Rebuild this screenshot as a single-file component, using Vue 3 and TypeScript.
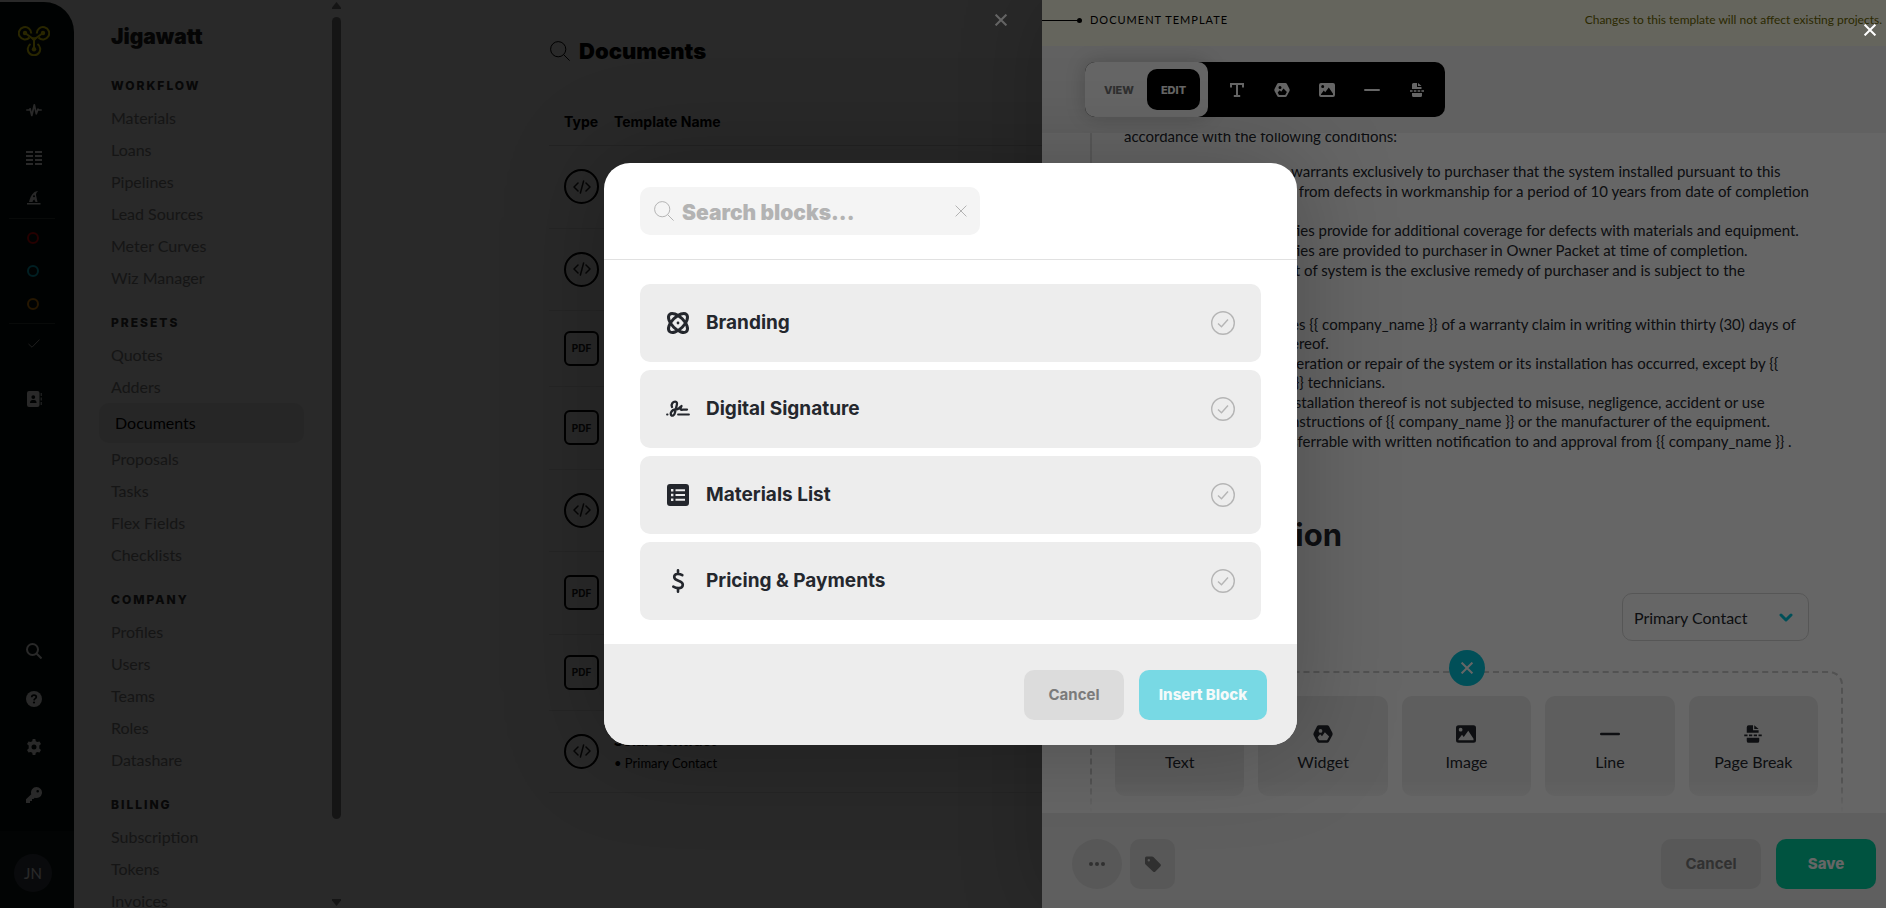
<script setup lang="ts">
import { ref } from 'vue'

interface NavGroup {
  title: string
  items: string[]
}

interface TemplateRow {
  kind: 'code' | 'pdf'
  size: 'short' | 'mid' | 'tall'
  name?: string
  note?: string
}

const groups: NavGroup[] = [
  { title: 'Workflow', items: ['Materials', 'Loans', 'Pipelines', 'Lead Sources', 'Meter Curves', 'Wiz Manager'] },
  { title: 'Presets', items: ['Quotes', 'Adders', 'Documents', 'Proposals', 'Tasks', 'Flex Fields', 'Checklists'] },
  { title: 'Company', items: ['Profiles', 'Users', 'Teams', 'Roles', 'Datashare'] },
  { title: 'Billing', items: ['Subscription', 'Tokens', 'Invoices'] },
]

const rows: TemplateRow[] = [
  { kind: 'code', size: 'tall' },
  { kind: 'code', size: 'mid' },
  { kind: 'pdf', size: 'short' },
  { kind: 'pdf', size: 'tall' },
  { kind: 'code', size: 'mid' },
  { kind: 'pdf', size: 'tall' },
  { kind: 'pdf', size: 'short' },
  { kind: 'code', size: 'mid', name: 'Solar Contract', note: '• Primary Contact' },
]

const tools = ['Text', 'Widget', 'Image', 'Line', 'Page Break']
const blocks = ['Branding', 'Digital Signature', 'Materials List', 'Pricing & Payments']

const warranty: string[] = [
  'warrants exclusively to purchaser that the system installed pursuant to this',
  '\u00a0\u00a0from defects in workmanship for a period of 10 years from date of completion',
]
const coverage: string[] = [
  'ties provide for additional coverage for defects with materials and equipment.',
  'ties are provided to purchaser in Owner Packet at time of completion.',
  '\u00a0t of system is the exclusive remedy of purchaser and is subject to the',
]
const conditions: string[][] = [
  ['es {{ company_name }} of a warranty claim in writing within thirty (30) days of', 'ereof.'],
  ['teration or repair of the system or its installation has occurred, except by {{', '\u00a0}} technicians.'],
  ['\u00a0stallation thereof is not subjected to misuse, negligence, accident or use', 'nstructions of {{ company_name }} or the manufacturer of the equipment.'],
  ['sferrable with written notification to and approval from {{ company_name }} .'],
]

const search = ref('')
const contact = ref('Primary Contact')
</script>

<template>
  <div class="app">
    <svg class="defs" aria-hidden="true">
      <symbol id="i-search" viewBox="0 0 20 20">
        <circle cx="8.200" cy="8.200" r="7.600" fill="none" stroke="currentColor" />
        <path d="M13.600 13.600 19.600 19.600" fill="none" stroke="currentColor" />
      </symbol>
      <symbol id="i-x" viewBox="0 0 12 12">
        <path d="M.6.6 11.400 11.400M11.400.6.6 11.400" fill="none" stroke="currentColor" />
      </symbol>
      <symbol id="i-Text" viewBox="0 0 16 16">
        <path d="M1 1h14v4.500h-2V3H9v10h2.200v2H4.800v-2H7V3H3v2.500H1z" fill="currentColor" />
      </symbol>
      <symbol id="i-Widget" viewBox="0 0 16 16">
        <path fill-rule="evenodd" fill="currentColor" d="M4.600 1h6.800c.6 0 1.100.3 1.400.8l2.700 5.200c.3.600.3 1.300 0 1.900l-2.800 5.300c-.3.500-.8.800-1.400.8H4.700c-.6 0-1.100-.3-1.400-.8L.5 8.900C.2 8.300.2 7.700.5 7.100l2.700-5.300c.3-.5.8-.8 1.400-.8zM6 4a1.500 1.500 0 1 0 0 3 1.500 1.500 0 0 0 0-3zM9.500 6.500 7.200 9.700 5.700 8.200 3.700 10.500 5 13h6.200l1.700-3z" />
      </symbol>
      <symbol id="i-Image" viewBox="0 0 16 16">
        <path fill-rule="evenodd" fill="currentColor" d="M2 1h12a2 2 0 0 1 2 2v10a2 2 0 0 1-2 2H2a2 2 0 0 1-2-2V3a2 2 0 0 1 2-2zM3.700 3a1.500 1.500 0 1 0 0 3 1.500 1.500 0 0 0 0-3zM9.800 5.400 6.200 10.300 4.800 8.600 2 12.200v.8h12v-1.200z" />
      </symbol>
      <symbol id="i-Line" viewBox="0 0 16 16">
        <rect y="7" width="16" height="2" rx="1" fill="currentColor" />
      </symbol>
      <symbol id="i-Break" viewBox="0 0 16 16">
        <path fill="currentColor" d="M3 7V2.500A1.500 1.500 0 0 1 4.500 1H8v4h4.500v2zM9 1l3.500 3H9zM3 11h10v2.500a1.500 1.500 0 0 1-1.500 1.500h-7A1.500 1.500 0 0 1 3 13.500zM1 8.300h2.600v1.400H1zM4.800 8.300h2.600v1.400H4.800zM8.600 8.300h2.600v1.400H8.600zM12.400 8.300H15v1.400h-2.600z" />
      </symbol>
      <symbol id="i-code" viewBox="0 0 18 14">
        <path d="M5 3 1 7l4 4M13 3l4 4-4 4M10.600 1 7.400 13" fill="none" stroke="currentColor" stroke-width="1.500" stroke-linecap="round" stroke-linejoin="round" />
      </symbol>
    </svg>

    <nav class="rail" aria-label="Main">
      <a class="logo" href="#" aria-label="Home">
        <svg viewBox="0 0 32 30" width="32" height="30" fill="none" stroke="currentColor" stroke-width="2">
          <path d="M7 7 16 13.500 25 7M16 13.500V23.500" />
          <path d="M11.500 11.500A6.200 6.200 0 1 1 13.200 7.500" />
          <path d="M20.500 11.500A6.200 6.200 0 1 0 18.800 7.500" />
          <path d="M12.500 18a6.200 6.200 0 1 0 7 0" />
          <g fill="currentColor" stroke="none"><circle cx="7" cy="7" r="2.200" /><circle cx="25" cy="7" r="2.200" /><circle cx="16" cy="23.300" r="2.200" /><path d="M12.500 11.200h7L16 16z" /></g>
        </svg>
      </a>
      <a class="rail-link" href="#" aria-label="Activity">
        <svg viewBox="0 0 16 16" width="16" height="16" fill="none" stroke="currentColor" stroke-width="1.700" stroke-linecap="round" stroke-linejoin="round"><path d="M.8 8h2.400l.9-1.200L5.800 13.500 8.300 2.800l2 9L12 7.200l.8.8h2.400" /></svg>
      </a>
      <a class="rail-link" href="#" aria-label="Columns">
        <svg viewBox="0 0 16 16" width="16" height="16" fill="currentColor"><path d="M0 1h7v2H0zM9 1h7v2H9zM0 5h7v2H0zM9 5h7v2H9zM0 9h7v2H0zM9 9h7v2H9zM0 13h7v2H0zM9 13h7v2H9z" /></svg>
      </a>
      <a class="rail-link close-link" href="#" aria-label="Wizard">
        <svg viewBox="0 0 16 16" width="16" height="16" fill="currentColor"><path fill-rule="evenodd" d="M3 12c1-4 2-7 5-9.500 1.300-1 3-1.500 4-1.500-1.500 1.500-2 2.700-2 4l1.500 7H9.500L8.300 9.500 7 10.500 6.500 12zM7 6.300a1 1 0 1 0 2 0 1 1 0 0 0-2 0zM1 13h13.500v1.500H1z" /></svg>
      </a>
      <div class="dots">
        <a class="dot red" href="#" aria-label="Blocked"></a>
        <a class="dot teal" href="#" aria-label="Active"></a>
        <a class="dot amber" href="#" aria-label="Waiting"></a>
      </div>
      <a class="rail-link tick" href="#" aria-label="Done">
        <svg viewBox="0 0 12 9" width="12" height="9" fill="none" stroke="currentColor"><path d="M.5 5 4 8.200 11.500.6" /></svg>
      </a>
      <a class="rail-link" href="#" aria-label="Contacts">
        <svg viewBox="0 0 16 16" width="16" height="16" fill="currentColor"><path fill-rule="evenodd" d="M3 0h8.500a2 2 0 0 1 2 2v12a2 2 0 0 1-2 2H3a2 2 0 0 1-2-2V2a2 2 0 0 1 2-2zM7.300 4.200a1.900 1.900 0 1 0 0 3.800 1.900 1.900 0 0 0 0-3.800zM4 12h6.600c0-2-1-3-2.300-3h-2C5 9 4 10 4 12zM14.700 2h1v3h-1zM14.700 6.500h1v3h-1zM14.700 11h1v3h-1z" /></svg>
      </a>
      <div class="rail-bottom">
        <a class="rail-link" href="#" aria-label="Search">
          <svg viewBox="0 0 16 16" width="16" height="16" fill="none" stroke="currentColor" stroke-width="2"><circle cx="6.500" cy="6.500" r="5.500" /><path d="m10.500 10.500 5 5" /></svg>
        </a>
        <a class="rail-link" href="#" aria-label="Help">
          <svg viewBox="0 0 16 16" width="16" height="16"><circle cx="8" cy="8" r="8" fill="currentColor" /><path d="M5.700 6.200C5.800 4.800 6.800 4.200 8 4.200s2.300.7 2.300 1.900c0 1.500-2.100 1.500-2.300 3.200" fill="none" stroke="#000808" stroke-width="1.700" /><circle cx="8" cy="11.500" r="1.100" fill="#000808" /></svg>
        </a>
        <a class="rail-link" href="#" aria-label="Settings">
          <svg viewBox="0 0 16 16" width="16" height="16" fill="currentColor"><path fill-rule="evenodd" d="M6.700 0h2.600l.5 2.200 1.500.9 2.200-.7 1.500 2.500-1.700 1.600v3l1.700 1.600-1.500 2.500-2.200-.7-1.500.9L9.300 16H6.700l-.5-2.200-1.500-.9-2.200.7L1 11.100l1.700-1.600v-3L1 4.900l1.500-2.500 2.200.7 1.500-.9zM8 5.500a2.500 2.500 0 1 0 0 5 2.500 2.500 0 0 0 0-5z" /></svg>
        </a>
        <a class="rail-link" href="#" aria-label="Keys">
          <svg viewBox="0 0 16 16" width="16" height="16" fill="currentColor"><path fill-rule="evenodd" d="M10.500 0a5.500 5.500 0 1 1-1.800 10.700L7.500 12H6v2H4v2H0v-3.800l5.300-5A5.500 5.500 0 0 1 10.500 0zM11.700 3a1.300 1.300 0 1 0 0 2.600 1.300 1.300 0 0 0 0-2.600z" /></svg>
        </a>
        <div class="account"><a class="avatar" href="#">JN</a></div>
      </div>
    </nav>

    <aside class="sidebar">
      <div class="menu">
        <h1>Jigawatt</h1>
        <section v-for="g in groups" :key="g.title">
          <h2>{{ g.title }}</h2>
          <a v-for="item in g.items" :key="item" href="#" :class="{ active: item === 'Documents' }">{{ item }}</a>
        </section>
      </div>
      <div class="scrollbar" aria-hidden="true">
        <svg viewBox="0 0 9 7" width="9" height="7"><path d="M4.500 0 9 5.500V7H0V5.500z" fill="currentColor" /></svg>
        <div class="thumb"></div>
        <svg viewBox="0 0 9 7" width="9" height="7"><path d="M4.500 7 0 1.500V0h9v1.500z" fill="currentColor" /></svg>
      </div>
    </aside>

    <main class="list">
      <header class="list-title">
        <svg width="20" height="20"><use href="#i-search" /></svg>
        <h2>Documents</h2>
      </header>
      <table>
        <thead>
          <tr><th class="type">Type</th><th>Template Name</th></tr>
        </thead>
        <tbody>
          <tr v-for="(r, i) in rows" :key="i" :class="r.size">
            <td class="type">
              <span v-if="r.kind === 'code'" class="badge round"><svg width="18" height="14"><use href="#i-code" /></svg></span>
              <span v-else class="badge">PDF</span>
            </td>
            <td><strong v-if="r.name">{{ r.name }}</strong><small v-if="r.note">{{ r.note }}</small></td>
          </tr>
        </tbody>
      </table>
    </main>

    <div class="shade">
      <button class="drawer-close" type="button" aria-label="Close panel"><svg width="12" height="12" stroke-width="2"><use href="#i-x" /></svg></button>
    </div>

    <section class="drawer">
      <header class="banner">
        <span class="pin"></span>
        <h2>DOCUMENT TEMPLATE</h2>
        <p>Changes to this template will not affect existing projects.</p>
      </header>
      <div class="toolbar">
        <div class="tools">
          <div class="mode">
            <button type="button">VIEW</button>
            <button type="button" class="on">EDIT</button>
          </div>
          <button v-for="t in tools" :key="t" class="tool" type="button" :aria-label="t">
            <svg width="16" height="16"><use :href="'#i-' + (t === 'Page Break' ? 'Break' : t)" /></svg>
          </button>
        </div>
      </div>
      <div class="canvas">
        <article>
          <p class="intro">accordance with the following conditions:</p>
          <p class="warranty"><span v-for="l in warranty" :key="l">{{ l }}</span></p>
          <p class="coverage"><span v-for="l in coverage" :key="l">{{ l }}</span></p>
          <ul>
            <li v-for="(c, i) in conditions" :key="i"><span v-for="l in c" :key="l">{{ l }}</span></li>
          </ul>
          <h3>tion</h3>
          <div class="signer">
            <div class="select">
              <select v-model="contact" aria-label="Signer"><option>Primary Contact</option></select>
              <svg viewBox="0 0 14 9" width="14" height="9" fill="none" stroke="currentColor" stroke-width="3" stroke-linecap="round" stroke-linejoin="round"><path d="m2 2 5 5 5-5" /></svg>
            </div>
          </div>
        </article>
        <div class="builder">
          <button class="collapse" type="button" aria-label="Close inserter"><svg width="12" height="12" stroke-width="2"><use href="#i-x" /></svg></button>
          <button v-for="t in tools" :key="t" class="tile" type="button">
            <svg width="20" height="20"><use :href="'#i-' + (t === 'Page Break' ? 'Break' : t)" /></svg>
            {{ t }}
          </button>
        </div>
      </div>
      <footer class="actions">
        <button class="more" type="button" aria-label="More"><svg viewBox="0 0 16 4" width="16" height="4" fill="currentColor"><circle cx="2" cy="2" r="2" /><circle cx="8" cy="2" r="2" /><circle cx="14" cy="2" r="2" /></svg></button>
        <button class="tag" type="button" aria-label="Tags"><svg viewBox="0 0 16 16" width="16" height="16" fill="currentColor"><path fill-rule="evenodd" d="M0 2a1.500 1.500 0 0 1 1.500-1.500H7c.6 0 1 .2 1.400.6l6.900 6.900a1.700 1.700 0 0 1 0 2.400l-4.900 5a1.700 1.700 0 0 1-2.400 0L.6 8.500A2 2 0 0 1 0 7zM3.800 3a1.200 1.200 0 1 0 0 2.400 1.200 1.200 0 0 0 0-2.400z" /></svg></button>
        <button class="btn cancel" type="button">Cancel</button>
        <button class="btn save" type="button">Save</button>
      </footer>
    </section>

    <div class="shade modal-shade">
      <button class="page-close" type="button" aria-label="Close dialog"><svg width="12" height="12" stroke-width="2"><use href="#i-x" /></svg></button>
      <div class="modal" role="dialog" aria-modal="true" aria-label="Insert block">
        <header>
          <label class="search">
            <svg width="20" height="20"><use href="#i-search" /></svg>
            <input v-model="search" type="text" placeholder="Search blocks..." aria-label="Search blocks">
            <button type="button" aria-label="Clear search" @click="search = ''"><svg width="12" height="12"><use href="#i-x" /></svg></button>
          </label>
        </header>
        <div class="blocks">
          <button v-for="(b, i) in blocks" :key="b" class="block" type="button">
            <svg v-if="i === 0" viewBox="0 0 24 24" width="24" height="24" fill="none" stroke="currentColor" stroke-width="3">
              <ellipse cx="12" cy="12" rx="12" ry="6" transform="rotate(45 12 12)" />
              <ellipse cx="12" cy="12" rx="12" ry="6" transform="rotate(-45 12 12)" />
              <circle cx="12" cy="12" r="1.400" fill="currentColor" stroke="none" />
            </svg>
            <svg v-else-if="i === 1" viewBox="0 0 24 24" width="24" height="24" fill="none" stroke="currentColor" stroke-width="2.300" stroke-linecap="round" stroke-linejoin="round">
              <path d="M6 10c-1.300-3 1-5.300 3.200-5.300 1.800 0 2 1.600 1.600 3.300L9 15.500c-.6 3.500-3.500 4-4.100 2.200C4.200 15.500 6 13 9 12.500l3-.5c1.500-.5 2-2.500 3.500-3-1 2-1.500 4 .2 3.800L17 12.600h4" />
              <path d="M1 17.500h.6M12 17.500h11" stroke-width="1.800" />
            </svg>
            <svg v-else-if="i === 2" viewBox="0 0 24 24" width="24" height="24" fill="currentColor">
              <path fill-rule="evenodd" d="M4 1h16a3 3 0 0 1 3 3v16a3 3 0 0 1-3 3H4a3 3 0 0 1-3-3V4a3 3 0 0 1 3-3zM9.500 6.200v2H19v-2zM9.500 11v2H19v-2zM9.500 15.800v2H19v-2zM5 6v2.400h2.400V6zM5 10.800v2.400h2.400v-2.400zM5 15.600V18h2.400v-2.400z" />
            </svg>
            <svg v-else viewBox="0 0 24 24" width="24" height="24" fill="none" stroke="currentColor" stroke-width="2.600" stroke-linecap="round">
              <path d="M16.300 6.200C14 4.800 8.200 3.900 8.200 8c0 4.800 8.600 2.800 8.600 7.800 0 4.400-6.300 3.800-9.500 1.900M12 1.300v2.500M12 20.200v2.500" />
            </svg>
            <span>{{ b }}</span>
            <svg class="check" viewBox="0 0 24 24" width="24" height="24" fill="none" stroke="currentColor"><circle cx="12" cy="12" r="11.300" stroke-width="1.400" /><path d="m7 12.500 3.500 3.200L17 8.500" stroke-width="1.400" /></svg>
          </button>
        </div>
        <footer>
          <button class="btn cancel" type="button">Cancel</button>
          <button class="btn insert" type="button" disabled>Insert Block</button>
        </footer>
      </div>
    </div>
  </div>
</template>

<style>
body {
  background: #fff;
}
</style>

<style scoped>
.app {
  position: relative;
  display: flex;
  height: 100vh;
  overflow: hidden;
  background: #fff;
  color: #24272d;
  font: 16px/20px Lato, "Liberation Sans", sans-serif;
}
.app * {
  box-sizing: border-box;
}
.defs {
  position: absolute;
  width: 0;
  height: 0;
}
h1, h2, h3, p, ul {
  margin: 0;
  padding: 0;
}
ul {
  list-style: none;
}
svg {
  display: block;
  flex: none;
}
a {
  color: inherit;
  text-decoration: none;
}
button {
  display: flex;
  align-items: center;
  justify-content: center;
  padding: 0;
  border: 0;
  background: none;
  color: inherit;
  font: inherit;
}

/* icon rail */
.rail {
  display: flex;
  flex: none;
  flex-direction: column;
  width: 74px;
  margin-top: 2px;
  border-top-right-radius: 30px;
  background: #06120f;
  color: #fff;
}
.logo {
  display: flex;
  margin: 24px 0 30px 18px;
  color: #fff000;
}
.rail-link {
  display: flex;
  align-items: center;
  height: 48px;
  padding-left: 26px;
}
.close-link {
  height: 32px;
}
.dots {
  display: flex;
  flex-direction: column;
  gap: 21px;
  width: 46px;
  margin: 4px 0 0 9px;
  padding: 13px 0 13px 18px;
  border: solid #343f3d;
  border-width: 1px 0;
}
.dot {
  width: 12px;
  height: 12px;
  border: 2px solid;
  border-radius: 50%;
}
.red { color: #e60000; }
.teal { color: #00c5db; }
.amber { color: #e68a00; }
.tick {
  height: 38px;
  margin-bottom: 13px;
  padding-left: 28px;
  color: #bbb;
}
.rail-bottom {
  margin-top: auto;
}
.account {
  display: flex;
  align-items: center;
  height: 77px;
  margin-top: 12px;
  padding: 6px 0 0 14px;
  background: #101d1a;
}
.avatar {
  display: flex;
  align-items: center;
  justify-content: center;
  width: 38px;
  height: 38px;
  border-radius: 50%;
  background: #3c4250;
  font-size: 15px;
}

/* settings menu */
.sidebar {
  display: flex;
  flex: none;
  justify-content: space-between;
  width: 267px;
  overflow: hidden;
}
.menu {
  width: 230px;
  padding: 22px 0 0 37px;
}
h1 {
  margin-bottom: 18px;
  color: #222;
  font: 900 21px/30px Inter, "Liberation Sans", sans-serif;
}
.menu section {
  margin-bottom: 13px;
}
.menu h2 {
  color: #333;
  font-family: Inter, "Liberation Sans", sans-serif;
  font-size: 12px;
  font-weight: 800;
  letter-spacing: 2px;
  line-height: 32px;
  text-transform: uppercase;
}
.menu a {
  display: block;
  color: #888;
  line-height: 32px;
}
.menu a.active {
  width: 205px;
  margin-left: -12px;
  padding-left: 16px;
  border-radius: 10px;
  background: #efefef;
  color: #000;
  line-height: 40px;
}
.scrollbar {
  display: flex;
  flex-direction: column;
  gap: 8px;
  width: 9px;
  padding: 2px 0;
  color: #888;
}
.thumb {
  flex: 1;
  margin-bottom: 72px;
  border-radius: 5px;
  background: #888;
}

/* template list */
.list {
  flex: 1;
  padding: 36px 0 0 208px;
  color: #000;
}
.list-title {
  display: flex;
  align-items: center;
  gap: 9px;
  padding-left: 1px;
}
.list-title h2 {
  font: 900 22px/30px Inter, "Liberation Sans", sans-serif;
}
table {
  width: 100%;
  margin-top: 34px;
  border-collapse: collapse;
}
tr {
  border-bottom: 1px solid #ebebeb;
}
thead tr {
  border-color: #ddd;
}
th {
  height: 45px;
  padding: 0;
  font-family: Inter, "Liberation Sans", sans-serif;
  font-size: 14px;
  font-weight: 700;
  text-align: left;
}
td {
  padding: 0;
}
.type {
  width: 65px;
  padding-left: 15px;
}
.short td { height: 76px; }
.mid td { height: 82px; }
.tall td { height: 83px; }
.badge {
  display: flex;
  align-items: center;
  justify-content: center;
  width: 35px;
  height: 35px;
  border: 2px solid #000;
  border-radius: 6px;
  color: #222;
  font: 700 10px/12px Inter, sans-serif;
}
.round {
  border-radius: 50%;
}
strong {
  display: block;
  font-weight: 900;
}
small {
  display: block;
  margin-top: 3px;
  font-size: 13px;
}

/* dimmed layers */
.shade {
  position: absolute;
  inset: 0;
  background: rgba(0, 0, 0, 0.6);
  color: #fff;
}
.drawer-close {
  position: absolute;
  top: 14px;
  right: 879px;
}
.page-close {
  position: absolute;
  top: 24px;
  right: 10px;
}

/* drawer */
.drawer {
  position: absolute;
  inset: 0 0 0 auto;
  display: flex;
  flex-direction: column;
  width: 844px;
  background: #fff;
  box-shadow: 0 0 80px rgba(0, 0, 0, 0.2);
}
.banner {
  display: flex;
  flex: none;
  align-items: center;
  height: 46px;
  padding: 0 4px 6px 0;
  background: #fdfde8;
  color: #000;
}
.pin {
  display: flex;
  align-items: center;
  justify-content: flex-end;
  width: 36px;
  height: 1px;
  margin-right: 12px;
  background: #000;
}
.pin::after {
  flex: none;
  width: 5px;
  height: 5px;
  margin-right: -4px;
  border-radius: 50%;
  background: #000;
  content: "";
}
.banner h2 {
  font-size: 11px;
  font-weight: 400;
  letter-spacing: 1px;
}
.banner p {
  margin-left: auto;
  color: #6e6800;
  font-size: 12px;
}
.toolbar {
  flex: none;
  padding: 16px 43px;
  background: #f2f2f2;
}
.tools {
  display: flex;
  width: 360px;
  height: 55px;
  padding-right: 6px;
  border-radius: 10px;
  background: #000;
  color: #fff;
}
.mode {
  display: flex;
  align-items: center;
  width: 123px;
  margin-right: 6px;
  padding-right: 8px;
  border-radius: 10px;
  background: #fff;
  box-shadow: 0 0 20px rgba(0, 0, 0, 0.2);
  color: #777;
  font-family: Inter, "Liberation Sans", sans-serif;
  font-size: 11px;
  font-weight: 800;
}
.mode button {
  flex: 1;
  height: 41px;
}
.mode button:first-child {
  padding-left: 6px;
}
.mode .on {
  flex: none;
  width: 53px;
  border-radius: 10px;
  background: #000;
  color: #fff;
}
.tool {
  flex: 1;
}
.canvas {
  display: flex;
  flex: 1;
  flex-direction: column;
  min-height: 0;
  padding: 0 43px 0 48px;
  overflow: hidden;
}
article {
  flex: none;
  margin-top: -8px;
  padding: 0 34px 0 32px;
  border-left: 2px solid #e0e0e0;
  font-size: 15px;
  line-height: 19px;
  white-space: nowrap;
}
article span {
  display: block;
}
.intro {
  line-height: 22px;
}
.warranty {
  margin: 14px 0 19px 167px;
  line-height: 20px;
}
.coverage {
  margin-left: 167px;
  line-height: 20px;
}
ul {
  margin: 35px 0 0 167px;
}
li {
  margin-bottom: 1px;
}
h3 {
  margin: 64px 0 38px 160px;
  font-family: Inter, "Liberation Sans", sans-serif;
  font-size: 31px;
  font-weight: 700;
  line-height: 40px;
}
.signer {
  display: flex;
  justify-content: flex-end;
}
.select {
  position: relative;
  width: 187px;
  color: #00c5db;
}
.select svg {
  position: absolute;
  top: 20px;
  right: 16px;
}
select {
  width: 100%;
  height: 48px;
  padding: 0 11px;
  border: 1px solid #d8d8d8;
  border-radius: 10px;
  appearance: none;
  background: #fff;
  color: #24272d;
  font: inherit;
  font-size: 16px;
}
.builder {
  position: relative;
  display: grid;
  flex: none;
  grid-template-columns: repeat(5, 1fr);
  gap: 14px;
  height: 200px;
  margin-top: 30px;
  padding: 23px;
  border: 2px dashed #ccc;
  border-radius: 14px;
}
.collapse {
  position: absolute;
  top: -23px;
  left: 50%;
  width: 36px;
  height: 36px;
  margin-left: -18px;
  border-radius: 50%;
  background: #03c5db;
  color: #fff;
}
.tile {
  flex-direction: column;
  gap: 8px;
  height: 100px;
  padding-top: 4px;
  border-radius: 10px;
  background: #ebebeb;
}
.actions {
  position: relative;
  display: flex;
  flex: none;
  align-items: center;
  gap: 8px;
  height: 95px;
  padding: 7px 10px 0 30px;
  background: #ededed;
  color: #787878;
}
.actions::before {
  position: absolute;
  right: 0;
  bottom: 100%;
  left: 0;
  height: 34px;
  background: linear-gradient(rgba(255, 255, 255, 0), #fff);
  content: "";
}
.more,
.tag {
  width: 50px;
  height: 50px;
  border-radius: 50%;
  background: #dcdcdc;
}
.tag {
  width: 45px;
  border-radius: 10px;
}
.btn {
  width: 100px;
  height: 50px;
  border-radius: 10px;
  background: #dcdcdc;
  color: #7b7b7b;
  font-family: Inter, "Liberation Sans", sans-serif;
  font-size: 15px;
  font-weight: 700;
}
.actions .cancel {
  margin: 0 7px 0 auto;
}
.actions .save {
  background: #00cfa0;
  color: #fff;
  font-weight: 800;
}

/* dialog */
.modal-shade {
  display: flex;
  align-items: center;
  justify-content: center;
  padding-left: 15px;
}
.modal {
  width: 693px;
  overflow: hidden;
  border-radius: 26px;
  background: #fff;
  box-shadow: 0 0 100px rgba(0, 0, 0, 0.25);
  color: #24272d;
}
.modal header {
  padding: 24px 36px;
  border-bottom: 1px solid #e1e1e1;
}
.search {
  display: flex;
  align-items: center;
  gap: 8px;
  width: 340px;
  height: 48px;
  padding: 0 13px 0 14px;
  border-radius: 10px;
  background: #f4f4f4;
  color: #b3b3b3;
}
.search input {
  flex: 1;
  min-width: 0;
  height: 48px;
  padding: 2px 0 0;
  border: 0;
  outline: 0;
  background: none;
  color: inherit;
  font: 900 21px/30px Inter, "Liberation Sans", sans-serif;
}
.search input::placeholder {
  color: inherit;
  opacity: 1;
}
.blocks {
  display: grid;
  gap: 8px;
  padding: 24px 36px;
}
.block {
  gap: 16px;
  height: 78px;
  padding: 0 26px;
  border-radius: 10px;
  background: #ededed;
  font-family: Inter, "Liberation Sans", sans-serif;
  font-size: 19px;
  font-weight: 700;
}
.check {
  margin-left: auto;
  color: #b5b5b5;
}
.modal footer {
  display: flex;
  justify-content: flex-end;
  gap: 15px;
  padding: 26px 30px 25px;
  background: #ededed;
}
.modal .insert {
  width: 128px;
  background: #78d9e4;
  color: #f5fafa;
  font-weight: 800;
}
</style>
